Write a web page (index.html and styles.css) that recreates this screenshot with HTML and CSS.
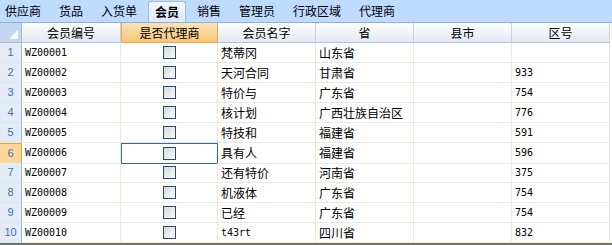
FILE: index.html
```html
<!DOCTYPE html>
<html lang="zh-CN">

<head>
    <meta charset="UTF-8">
    <title>会员</title>
    <link rel="stylesheet" href="styles.css">
</head>

<body>
    <div class="tabs">
        <span class="tab">供应商</span>
        <span class="tab">货品</span>
        <span class="tab">入货单</span>
        <span class="tab active">会员</span>
        <span class="tab">销售</span>
        <span class="tab">管理员</span>
        <span class="tab">行政区域</span>
        <span class="tab">代理商</span>
    </div>

    <div class="grid">
        <div class="row head">
            <div class="corner">
                <svg width="9" height="9" viewBox="0 0 9 9"><polygon points="9,0 9,9 0,9" fill="#fff"/></svg>
            </div>
            <div class="hcell">会员编号</div>
            <div class="hcell sel">是否代理商</div>
            <div class="hcell">会员名字</div>
            <div class="hcell">省</div>
            <div class="hcell">县市</div>
            <div class="hcell">区号</div>
        </div>

        <div class="row">
            <div class="num">1</div>
            <div class="cell code">WZ00001</div>
            <div class="cell check"><span class="box"></span></div>
            <div class="cell">梵蒂冈</div>
            <div class="cell">山东省</div>
            <div class="cell"></div>
            <div class="cell code"></div>
        </div>
        <div class="row">
            <div class="num">2</div>
            <div class="cell code">WZ00002</div>
            <div class="cell check"><span class="box"></span></div>
            <div class="cell">天河合同</div>
            <div class="cell">甘肃省</div>
            <div class="cell"></div>
            <div class="cell code">933</div>
        </div>
        <div class="row">
            <div class="num">3</div>
            <div class="cell code">WZ00003</div>
            <div class="cell check"><span class="box"></span></div>
            <div class="cell">特价与</div>
            <div class="cell">广东省</div>
            <div class="cell"></div>
            <div class="cell code">754</div>
        </div>
        <div class="row">
            <div class="num">4</div>
            <div class="cell code">WZ00004</div>
            <div class="cell check"><span class="box"></span></div>
            <div class="cell">核计划</div>
            <div class="cell">广西壮族自治区</div>
            <div class="cell"></div>
            <div class="cell code">776</div>
        </div>
        <div class="row">
            <div class="num">5</div>
            <div class="cell code">WZ00005</div>
            <div class="cell check"><span class="box"></span></div>
            <div class="cell">特技和</div>
            <div class="cell">福建省</div>
            <div class="cell"></div>
            <div class="cell code">591</div>
        </div>
        <div class="row current">
            <div class="num">6</div>
            <div class="cell code">WZ00006</div>
            <div class="cell check focus"><span class="box"></span></div>
            <div class="cell">具有人</div>
            <div class="cell">福建省</div>
            <div class="cell"></div>
            <div class="cell code">596</div>
        </div>
        <div class="row">
            <div class="num">7</div>
            <div class="cell code">WZ00007</div>
            <div class="cell check"><span class="box"></span></div>
            <div class="cell">还有特价</div>
            <div class="cell">河南省</div>
            <div class="cell"></div>
            <div class="cell code">375</div>
        </div>
        <div class="row">
            <div class="num">8</div>
            <div class="cell code">WZ00008</div>
            <div class="cell check"><span class="box"></span></div>
            <div class="cell">机液体</div>
            <div class="cell">广东省</div>
            <div class="cell"></div>
            <div class="cell code">754</div>
        </div>
        <div class="row">
            <div class="num">9</div>
            <div class="cell code">WZ00009</div>
            <div class="cell check"><span class="box"></span></div>
            <div class="cell">已经</div>
            <div class="cell">广东省</div>
            <div class="cell"></div>
            <div class="cell code">754</div>
        </div>
        <div class="row">
            <div class="num">10</div>
            <div class="cell code">WZ00010</div>
            <div class="cell check"><span class="box"></span></div>
            <div class="cell code">t43rt</div>
            <div class="cell">四川省</div>
            <div class="cell"></div>
            <div class="cell code">832</div>
        </div>
    </div>
    <div class="foot"></div>
</body>

</html>
```

FILE: styles.css
```css
* {
    margin: 0;
    padding: 0;
    box-sizing: border-box;
}

body {
    width: 612px;
    height: 245px;
    overflow: hidden;
    background: #fff;
    font-family: "Noto Sans CJK SC", "Liberation Sans", sans-serif;
    font-size: 12px;
    color: #000;
}

/* 顶部页签 */
.tabs {
    display: flex;
    align-items: flex-end;
    height: 22px;
    background: #bfdbff;
    padding-left: 0;
}

.tab {
    height: 21px;
    line-height: 20px;
    padding: 0 7px;
    margin-right: 4px;
    font-size: 12px;
    color: #000;
}

.tab:first-child {
    margin-left: -2px;
}

.tab.active {
    font-weight: bold;
    background: linear-gradient(#f3f8ff, #dce9fb);
    border: 1px solid #9ebde6;
    border-bottom: none;
    border-radius: 3px 3px 0 0;
    line-height: 19px;
    padding: 0 6px;
}

/* 表格 */
.grid {
    border-top: 1px solid #8eb0dc;
}

.row {
    display: grid;
    grid-template-columns: 22px 99px 97px 98px 98px 98px 98px;
    height: 20px;
}

.row.head {
    height: 20px;
}

.corner {
    background: #c4d7ef;
    border-right: 1px solid #9fb9dd;
    border-bottom: 1px solid #9fb9dd;
    display: flex;
    align-items: flex-end;
    justify-content: flex-end;
    padding: 0 3px 3px 0;
}

.hcell {
    background: linear-gradient(#fdfeff, #e3e9f2);
    border-right: 1px solid #c7d3e4;
    border-bottom: 1px solid #aec3e0;
    text-align: center;
    line-height: 19px;
}

.hcell.sel {
    background: linear-gradient(#fbe3b4, #f6c677);
    border: 1px solid #f0a848;
    border-top: none;
    line-height: 19px;
}

.num {
    background: #e3ebf7;
    border-right: 1px solid #9fb9dd;
    border-bottom: 1px solid #dbe4f2;
    color: #3e6fb0;
    font-family: "Liberation Sans", sans-serif;
    font-size: 11px;
    line-height: 19px;
    text-align: center;
}

.current .num {
    background: #fdd69c;
    border: 1px solid #f0a040;
    border-left: none;
}

.cell {
    border-right: 1px solid #ebe9da;
    border-bottom: 1px solid #ebe9da;
    padding-left: 3px;
    line-height: 19px;
    white-space: nowrap;
    overflow: hidden;
}

.cell.code {
    font-family: "DejaVu Sans Mono", "Liberation Mono", monospace;
    font-size: 10px;
}

.cell.check {
    display: flex;
    align-items: center;
    justify-content: center;
    padding-left: 0;
}

.cell.focus {
    border: 1px solid #3767ad;
}

.box {
    display: block;
    width: 13px;
    height: 13px;
    border: 1px solid #1e4f7e;
    background: linear-gradient(135deg, #d8d8d4, #fbfbfb);
}

.foot {
    height: 2px;
    background: #76746a;
}
```
